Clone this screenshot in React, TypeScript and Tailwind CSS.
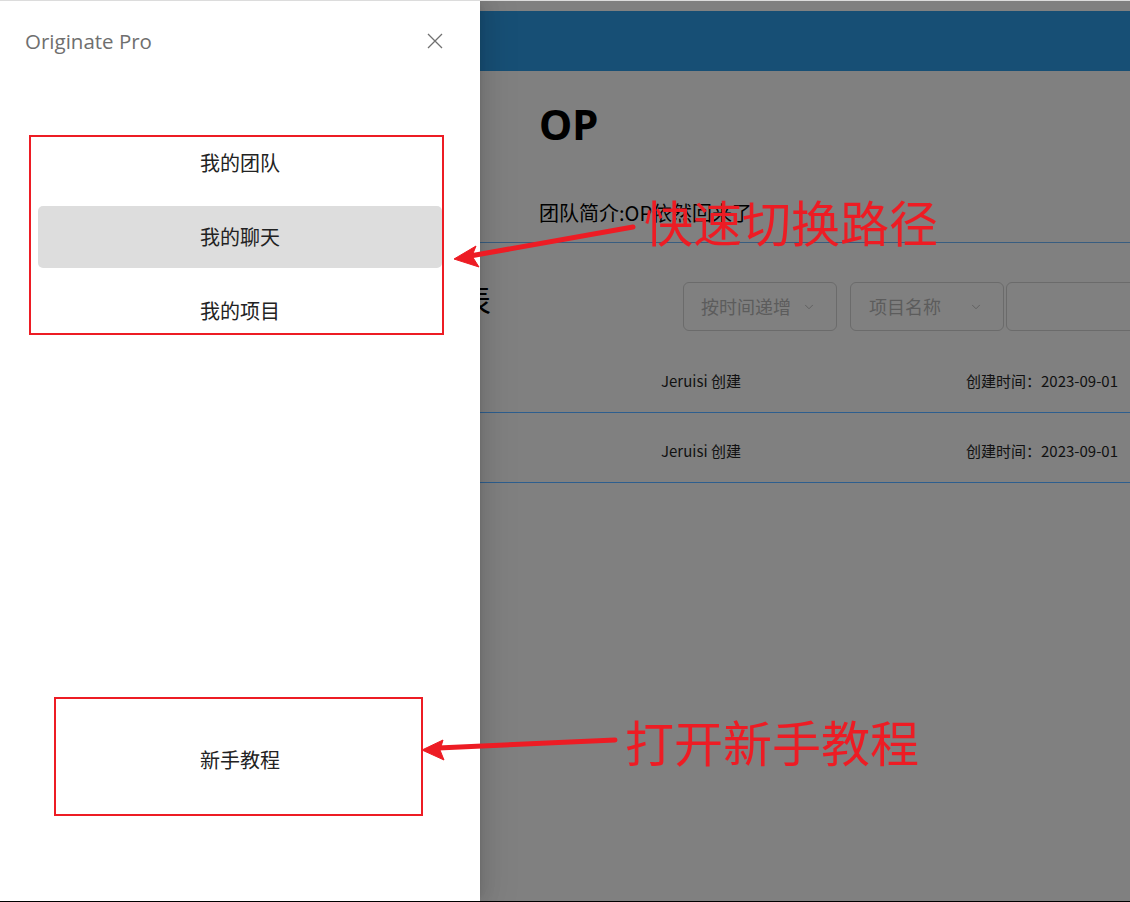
import { ChevronDown } from "lucide-react";

const menuItems = [
  { label: "我的团队", active: false },
  { label: "我的聊天", active: true },
  { label: "我的项目", active: false },
];

const projects = [
  { creator: "Jeruisi 创建", time: "创建时间：2023-09-01" },
  { creator: "Jeruisi 创建", time: "创建时间：2023-09-01" },
];

function CloseIcon() {
  return (
    <svg width="16" height="16" viewBox="0 0 16 16" fill="none">
      <path d="M1 1L15 15M15 1L1 15" stroke="#707070" strokeWidth="1.3" />
    </svg>
  );
}

// page behind the drawer, already drawn with the mask colours
function TeamPage() {
  return (
    <div className="h-full bg-[#808080] pt-[10px] overflow-hidden">
      <div className="h-[60px] bg-[#174f75]" />

      <div className="pl-[539px] pt-[29px] text-[42px] leading-[48px] font-bold text-black font-['Noto_Sans',sans-serif]">
        OP
      </div>

      <div className="pl-[539px] pt-[51px] pb-[15px] text-[20px] leading-[28px] text-black border-b border-[#385d80]">
        团队简介:OP依然回来了
      </div>

      <div className="flex h-[49px] mt-[39px]">
        <div className="shrink-0 ml-[363px] w-[320px] text-[32px] leading-[32px] text-black whitespace-nowrap">
          项目列表
        </div>
        <div className="shrink-0 w-[154px] h-[49px] flex items-center justify-between pl-[17px] pr-[20px] border border-[#6b6b6b] rounded-[6px]">
          <span className="w-[90px] overflow-hidden whitespace-nowrap text-[18px] text-[#5c5c5c]">
            按时间递增
          </span>
          <ChevronDown size={14} strokeWidth={1.4} className="shrink-0 text-[#5a5a5a]" />
        </div>
        <div className="shrink-0 ml-[13px] w-[154px] h-[49px] flex items-center justify-between pl-[18px] pr-[20px] border border-[#6b6b6b] rounded-[6px]">
          <span className="text-[18px] text-[#5c5c5c] whitespace-nowrap">项目名称</span>
          <ChevronDown size={14} strokeWidth={1.4} className="shrink-0 text-[#5a5a5a]" />
        </div>
        <div className="shrink-0 ml-[2px] w-[200px] h-[49px] border border-[#6b6b6b] rounded-[6px]" />
      </div>

      <div className="mt-[12px]">
        {projects.map((p, i) => (
          <div
            key={i}
            className="h-[70px] flex items-center pt-[7px] border-b border-[#2d5e8e] text-[15px] text-[#111] whitespace-nowrap"
          >
            <span className="shrink-0 pl-[661px] w-[966px]">{p.creator}</span>
            <span className="shrink-0">{p.time}</span>
          </div>
        ))}
      </div>
    </div>
  );
}

function Drawer() {
  return (
    <div className="absolute left-0 top-0 bottom-0 w-[480px] bg-white flex flex-col shadow-[6px_0_16px_0_rgba(0,0,0,0.08),3px_0_6px_-4px_rgba(0,0,0,0.12),9px_0_28px_8px_rgba(0,0,0,0.05)]">
      <div className="flex items-center justify-between pt-[26px] pl-[25px] pr-[37px]">
        <span className="text-[20.5px] leading-[28px] text-[#6f6f6f] font-['Open_Sans',sans-serif]">
          Originate Pro
        </span>
        <CloseIcon />
      </div>

      <div className="mt-[77px] px-[38px] flex flex-col gap-3">
        {menuItems.map((m) => (
          <div
            key={m.label}
            className={`h-[62px] flex items-center justify-center rounded-[5px] text-[20px] text-[#222] ${
              m.active ? "bg-[#dddddd]" : ""
            }`}
          >
            {m.label}
          </div>
        ))}
      </div>

      <div className="mt-auto mb-[110px] px-[38px]">
        <div className="h-[62px] flex items-center justify-center text-[20px] text-[#222]">
          新手教程
        </div>
      </div>
    </div>
  );
}

// red markup drawn on top of the screenshot
function Annotations() {
  return (
    <>
      <div className="absolute left-[29px] top-[134px] w-[415px] h-[200px] border-2 border-[#ed1c24]" />
      <div className="absolute left-[54px] top-[696px] w-[369px] h-[119px] border-2 border-[#ed1c24]" />

      <svg
        className="absolute left-0 top-[-1px] pointer-events-none"
        width="1130"
        height="902"
        viewBox="0 0 1130 902"
      >
        <g fill="#ed1c24" stroke="#ed1c24">
          <path d="M633 227L470 256" strokeWidth="5" strokeLinecap="round" fill="none" />
          <path d="M454 259L476 246L472 256L479 267Z" strokeWidth="1" strokeLinejoin="round" />
          <path d="M615 740L438 748" strokeWidth="5" strokeLinecap="round" fill="none" />
          <path d="M422 750L443 740L440 750L444 760Z" strokeWidth="1" strokeLinejoin="round" />
        </g>
      </svg>

      <div className="absolute left-[644px] top-[195px] text-[49px] leading-[49px] text-[#ed1c24] whitespace-nowrap">
        快速切换路径
      </div>
      <div className="absolute left-[625px] top-[715px] text-[49px] leading-[49px] text-[#ed1c24] whitespace-nowrap">
        打开新手教程
      </div>
    </>
  );
}

export default function App() {
  return (
    <div className="relative w-[1130px] h-[902px] overflow-hidden border-t border-b border-t-[#dcdcdc] border-b-black font-['Noto_Sans_CJK_SC',sans-serif]">
      <TeamPage />
      <Drawer />
      <Annotations />
    </div>
  );
}
